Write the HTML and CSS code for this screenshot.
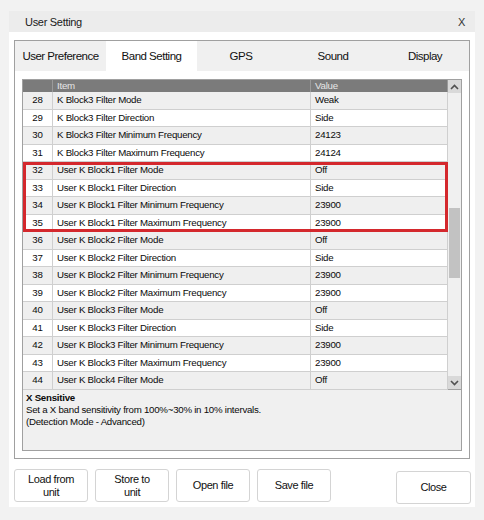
FILE: index.html
```html
<!DOCTYPE html>
<html lang="en">
<head>
    <meta charset="UTF-8">
    <meta name="viewport" content="width=device-width, initial-scale=1.0">
    <title>User Setting</title>
    <link rel="stylesheet" href="styles.css">
</head>
<body>
    <div class="window">
        <div class="titlebar">
            <span class="title">User Setting</span>
            <span class="close-x">X</span>
        </div>
        <div class="panel">
            <div class="tabs">
                <div class="tab tab-pref">User Preference</div>
                <div class="tab tab-band active">Band Setting</div>
                <div class="tab tab-gps">GPS</div>
                <div class="tab tab-sound">Sound</div>
                <div class="tab tab-display">Display</div>
            </div>
            <div class="page">
                <div class="grid">
                    <div class="grid-main">
                        <div class="head">
                            <div class="hcell"></div>
                            <div class="hcell">Item</div>
                            <div class="hcell">Value</div>
                        </div>
                        <div class="rows">
                            <div class="row"><div class="num">28</div><div class="cell">K Block3 Filter Mode</div><div class="cell">Weak</div></div>
                            <div class="row"><div class="num">29</div><div class="cell">K Block3 Filter Direction</div><div class="cell">Side</div></div>
                            <div class="row"><div class="num">30</div><div class="cell">K Block3 Filter Minimum Frequency</div><div class="cell">24123</div></div>
                            <div class="row"><div class="num">31</div><div class="cell">K Block3 Filter Maximum Frequency</div><div class="cell">24124</div></div>
                            <div class="row"><div class="num">32</div><div class="cell">User K Block1 Filter Mode</div><div class="cell">Off</div></div>
                            <div class="row"><div class="num">33</div><div class="cell">User K Block1 Filter Direction</div><div class="cell">Side</div></div>
                            <div class="row"><div class="num">34</div><div class="cell">User K Block1 Filter Minimum Frequency</div><div class="cell">23900</div></div>
                            <div class="row"><div class="num">35</div><div class="cell">User K Block1 Filter Maximum Frequency</div><div class="cell">23900</div></div>
                            <div class="row"><div class="num">36</div><div class="cell">User K Block2 Filter Mode</div><div class="cell">Off</div></div>
                            <div class="row"><div class="num">37</div><div class="cell">User K Block2 Filter Direction</div><div class="cell">Side</div></div>
                            <div class="row"><div class="num">38</div><div class="cell">User K Block2 Filter Minimum Frequency</div><div class="cell">23900</div></div>
                            <div class="row"><div class="num">39</div><div class="cell">User K Block2 Filter Maximum Frequency</div><div class="cell">23900</div></div>
                            <div class="row"><div class="num">40</div><div class="cell">User K Block3 Filter Mode</div><div class="cell">Off</div></div>
                            <div class="row"><div class="num">41</div><div class="cell">User K Block3 Filter Direction</div><div class="cell">Side</div></div>
                            <div class="row"><div class="num">42</div><div class="cell">User K Block3 Filter Minimum Frequency</div><div class="cell">23900</div></div>
                            <div class="row"><div class="num">43</div><div class="cell">User K Block3 Filter Maximum Frequency</div><div class="cell">23900</div></div>
                            <div class="row"><div class="num">44</div><div class="cell">User K Block4 Filter Mode</div><div class="cell">Off</div></div>
                            <!-- caja roja sobre las filas 32-35 -->
                            <div class="highlight"></div>
                        </div>
                    </div>
                    <div class="scrollbar">
                        <div class="arrow">
                            <svg width="9" height="6" viewBox="0 0 9 6"><path d="M1 5 L4.5 1.5 L8 5" fill="none" stroke="#505050" stroke-width="1.6"/></svg>
                        </div>
                        <div class="track"><div class="thumb"></div></div>
                        <div class="arrow">
                            <svg width="9" height="6" viewBox="0 0 9 6"><path d="M1 1 L4.5 4.5 L8 1" fill="none" stroke="#505050" stroke-width="1.6"/></svg>
                        </div>
                    </div>
                </div>
                <div class="desc">
                    <div class="desc-title">X Sensitive</div>
                    <div>Set a X band sensitivity from 100%~30% in 10% intervals.</div>
                    <div>(Detection Mode - Advanced)</div>
                </div>
            </div>
        </div>
        <div class="buttons">
            <button class="btn">Load from<br>unit</button>
            <button class="btn">Store to<br>unit</button>
            <button class="btn">Open file</button>
            <button class="btn">Save file</button>
            <button class="btn btn-close">Close</button>
        </div>
    </div>
</body>
</html>
```

FILE: styles.css
```css
body{
    margin: 0;
    background-color: #f2f2f2;
    font-family: 'Liberation Sans', Arial, sans-serif;
    color: #1a1a1a;
}
/*ventana principal*/
.window{
    width: 466px;
    height: 496px;
    margin: 11px 0 0 9px;
    background-color: #ffffff;
}
.titlebar{
    height: 21px;
    background-color: #ececec;
    display: flex;
    align-items: center;
    justify-content: space-between;
    padding: 0 10px 0 16px;
    font-size: 11px;
    letter-spacing: -0.3px;
}
.close-x{
    font-size: 11px;
    color: #333;
}
.panel{
    width: 456px;
    height: 419px;
    margin: 8px 0 0 5px;
    border: 1px solid #a0a0a0;
    box-sizing: border-box;
}
.tabs{
    display: flex;
    height: 30px;
    background-color: #f0f0f0;
}
.tab{
    display: flex;
    align-items: center;
    justify-content: center;
    font-size: 11.5px;
    letter-spacing: -0.5px;
    color: #111;
}
.tab-pref{ width: 91px; }
.tab-band{ width: 91px; }
.tab-gps{ width: 88px; }
.tab-sound{ width: 96px; }
.tab-display{ flex: 1; }
.active{
    background-color: #ffffff;
}
.page{
    padding: 8px 7px 0 7px;
}
/*tabla de datos*/
.grid{
    display: flex;
    height: 311px;
    border: 1px solid #a0a0a0;
    box-sizing: border-box;
    font-size: 9.7px;
    letter-spacing: -0.25px;
    color: #0a0a0a;
}
.grid-main{
    width: 425px;
}
.head{
    display: grid;
    grid-template-columns: 30px 258px 1fr;
    height: 12px;
    background-color: #7b7b7b;
    color: #e6e6e6;
    line-height: 12px;
}
.hcell{
    border-right: 1px solid #9a9a9a;
    padding-left: 4px;
}
.rows{
    position: relative;
}
.row{
    display: grid;
    grid-template-columns: 30px 258px 1fr;
    height: 17.5px;
    line-height: 16.5px;
    border-bottom: 1px solid #cfcfcf;
    box-sizing: border-box;
    background-color: #ffffff;
}
.row:nth-child(odd){
    background-color: #efefef;
}
.num{
    text-align: center;
    border-right: 1px solid #cfcfcf;
}
.cell{
    padding-left: 4px;
    border-right: 1px solid #cfcfcf;
    white-space: nowrap;
}
.highlight{
    position: absolute;
    left: 0;
    top: 70px;
    width: 425px;
    height: 70px;
    border: 3px solid #d4282d;
    box-sizing: border-box;
}
.scrollbar{
    flex: 1;
    display: flex;
    flex-direction: column;
    background-color: #f0f0f0;
}
.arrow{
    height: 13px;
    background-color: #d9d9d9;
    display: flex;
    align-items: center;
    justify-content: center;
}
.track{
    flex: 1;
    padding-top: 115px;
}
.thumb{
    width: 11px;
    height: 70px;
    margin-left: 1px;
    background-color: #c2c2c2;
}
.desc{
    height: 61px;
    border: 1px solid #a0a0a0;
    border-top: none;
    box-sizing: border-box;
    background-color: #f0f0f0;
    padding: 2px 3px;
    font-size: 9.7px;
    letter-spacing: -0.25px;
    line-height: 12px;
    color: #0a0a0a;
}
.desc-title{
    font-weight: bold;
}
/*botones de abajo*/
.buttons{
    display: flex;
    gap: 7px;
    padding: 10px 4px 0 5px;
}
.btn{
    width: 74px;
    height: 33px;
    background-color: #ffffff;
    border: 1px solid #d4d4d4;
    border-radius: 3px;
    font-family: 'Liberation Sans', Arial, sans-serif;
    font-size: 11px;
    letter-spacing: -0.4px;
    line-height: 13px;
    color: #111;
    padding: 0;
}
.btn-close{
    width: 75px;
    margin-left: auto;
    margin-top: 2px;
}
```
